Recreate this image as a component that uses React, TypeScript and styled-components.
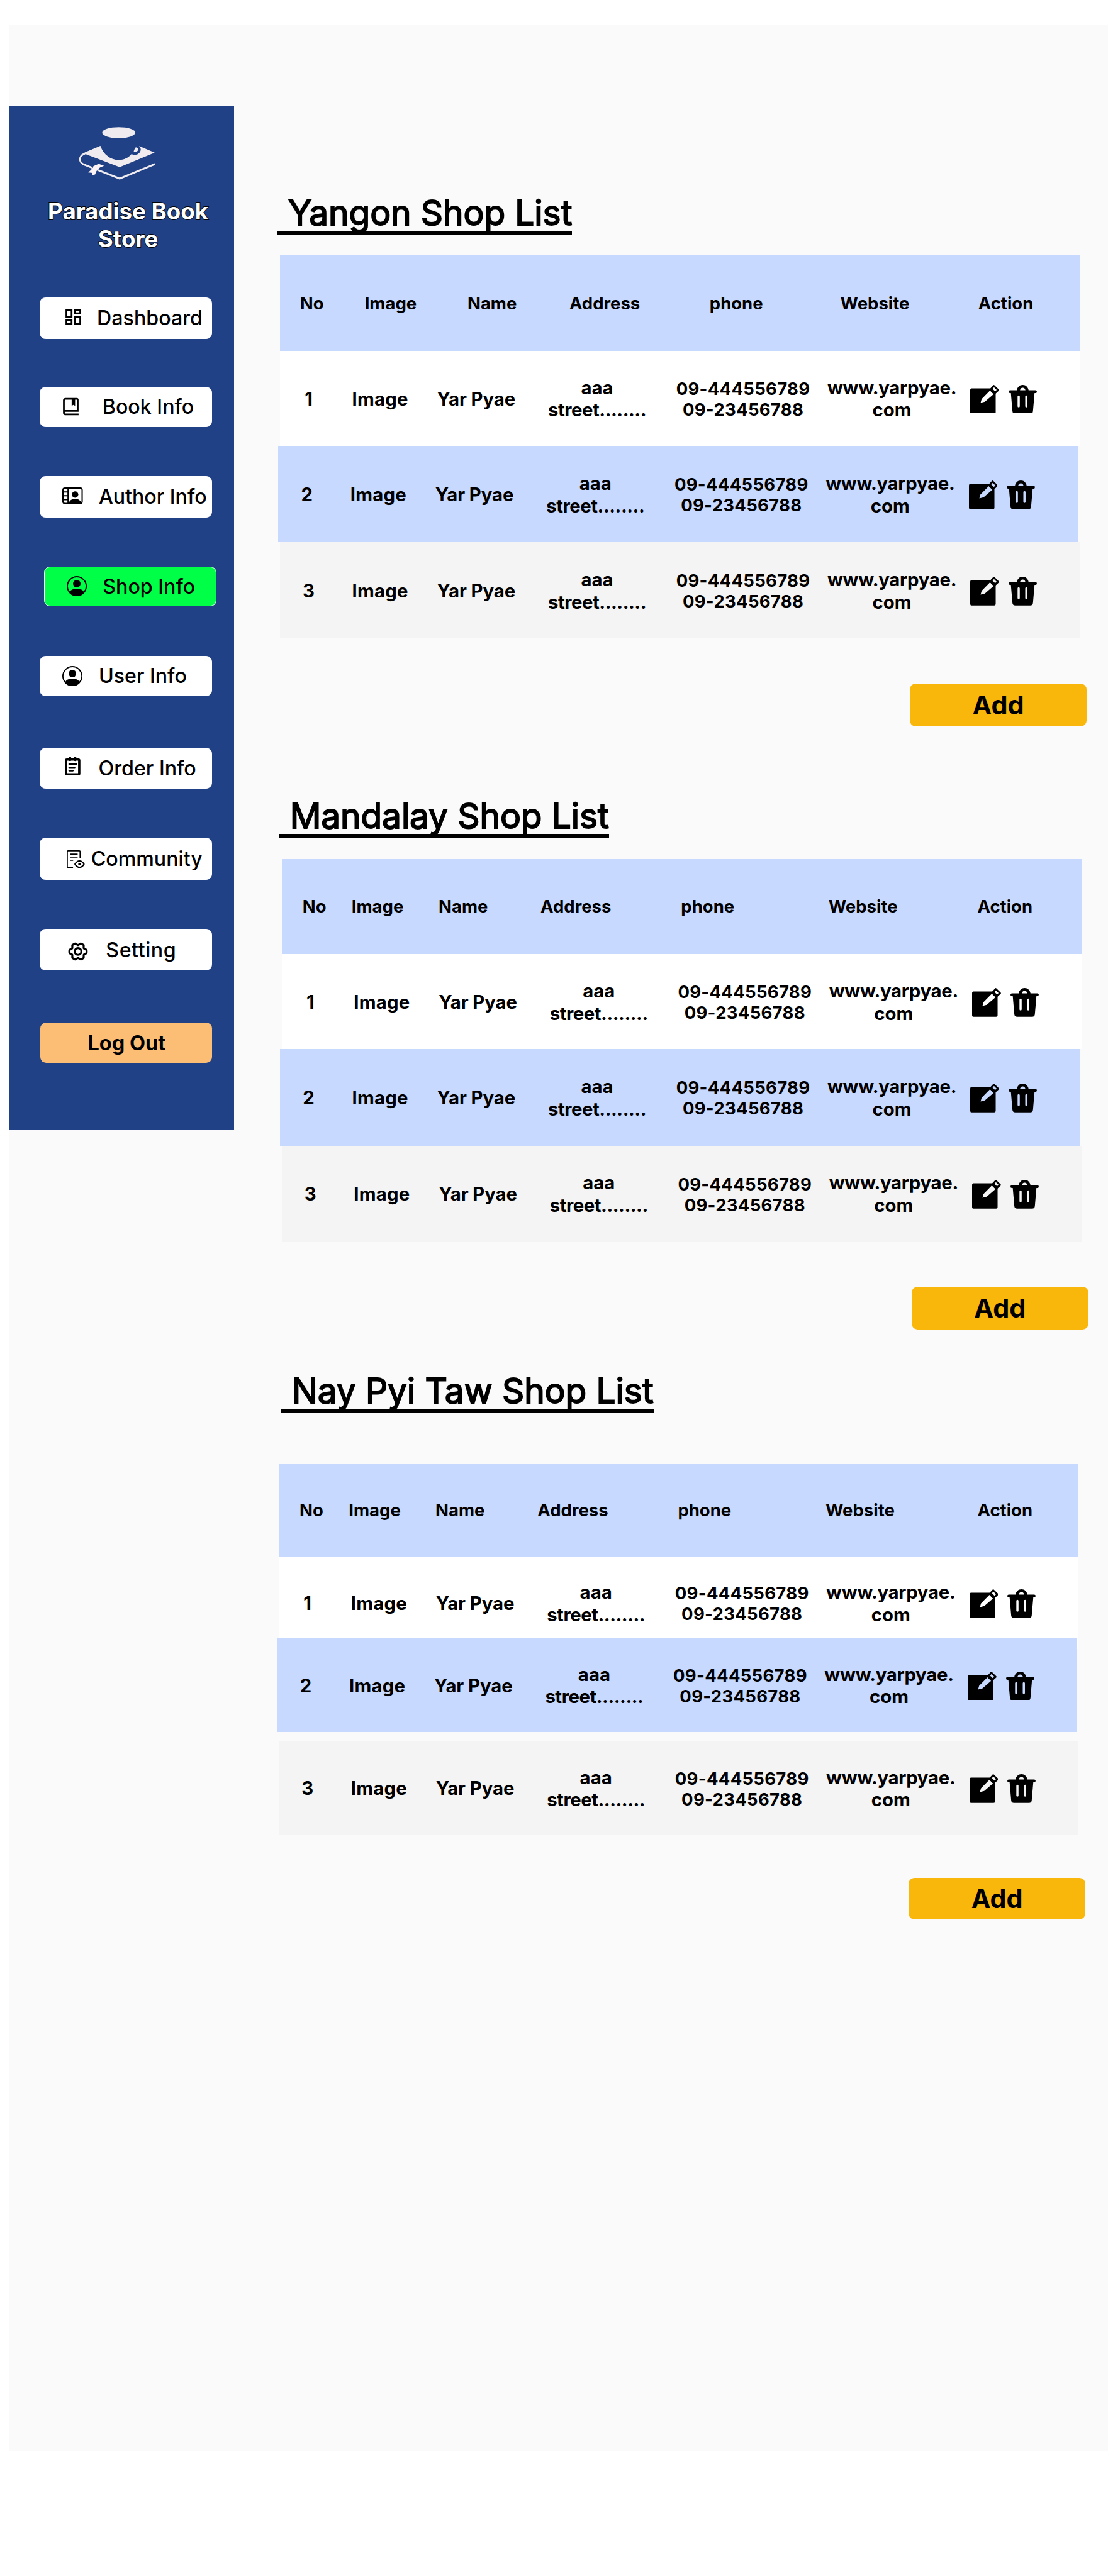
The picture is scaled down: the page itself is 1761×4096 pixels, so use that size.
import React from 'react';
import styled, { createGlobalStyle } from 'styled-components';
import { BsPersonCircle, BsPersonVideo2 } from 'react-icons/bs';
import { BiBookBookmark } from 'react-icons/bi';
import { MdOutlineDashboard } from 'react-icons/md';
import { PiGearSixBold } from 'react-icons/pi';

const colors = {
  panel: '#fafafa',
  navy: '#204186',
  green: '#00ff47',
  peach: '#fcbd74',
  amber: '#f9b60b',
  sky: '#c7d9ff',
  mist: '#f4f4f4',
};

const GlobalStyle = createGlobalStyle`
  * { box-sizing: border-box; }
  html, body { margin: 0; padding: 0; background: #fff; overflow: hidden; }
  button { font-family: inherit; color: inherit; cursor: pointer; }
`;

/* The design is drawn on a 1920px wide canvas. */
const Page = styled.div`
  zoom: 0.91705;
  width: 1920px;
  height: 4466px;
  padding: 43px 0 0 15px;
  background: #fff;
  color: #000;
  font-family: Inter, 'Liberation Sans', sans-serif;
`;

const Panel = styled.div`
  display: flex;
  align-items: flex-start;
  height: 4208px;
  padding-top: 141px;
  background: ${colors.panel};
`;

/* ---------- sidebar ---------- */

const Sidebar = styled.aside`
  flex: none;
  display: flex;
  flex-direction: column;
  width: 391px;
  height: 1775.4px;
  background: ${colors.navy};
`;

const LogoBox = styled.div`
  display: flex;
  height: 128.2px;
  padding: 36.5px 0 0 122px;
`;

const Brand = styled.h1`
  width: 300px;
  margin: 30px 0 0 57px;
  font-size: 40px;
  font-weight: 700;
  line-height: 48.4px;
  text-align: center;
  color: #fff;
  -webkit-text-stroke: 2px #000;
  paint-order: stroke fill;
`;

const Nav = styled.nav`
  display: flex;
  flex-direction: column;
  padding: 77px 0 0 54px;
`;

const NavItem = styled.button<{ $height: number; $gap: number; $active?: boolean }>`
  display: flex;
  align-items: center;
  width: 299px;
  height: ${(p) => p.$height}px;
  margin: 0 0 ${(p) => p.$gap}px ${(p) => (p.$active ? 7 : 0)}px;
  padding: 0;
  border: 1.1px solid #fff;
  border-radius: 10px;
  background: ${(p) => (p.$active ? colors.green : '#fff')};
  font-size: 35.1px;
  font-weight: 450;
  line-height: 1.21;
`;

const NavIcon = styled.span<{ $start: number; $drop?: number }>`
  flex: none;
  display: flex;
  margin: ${(p) => (p.$drop ?? 0) * 2}px 0 0 ${(p) => p.$start}px;
`;

const NavLabel = styled.span<{ $start: number; $spacing?: number }>`
  margin-left: ${(p) => p.$start}px;
  padding-top: 1.4px;
  letter-spacing: ${(p) => p.$spacing ?? 0}px;
  white-space: nowrap;
`;

const LogOut = styled.button`
  width: 297px;
  height: 70px;
  margin-left: 1px;
  padding: 2px 0 0 2px;
  border: 0;
  border-radius: 10px;
  background: ${colors.peach};
  font-size: 35.4px;
  font-weight: 700;
  line-height: 1.21;
`;

function Logo() {
  return (
    <svg width="132" height="91.5" viewBox="411 541 396 224" preserveAspectRatio="none" fill="#efebee">
      <ellipse cx="616" cy="565" rx="86" ry="23.5" />
      <path d="M521 622C537 658 574 681 615 681C643 681 668 671 683 655C694 662 713 661 724 650C734 640 732 628 721 621L803 650L621 711L447 657L436 651Z" />
      <path d="M693 648C696 636 701 630 705 627C714 628 720 634 717 640C711 647 702 648 693 648Z" />
      <path d="M522 625L441 653C406 664 406 690 437 701L621 760L805 698" fill="none" stroke="#efebee" strokeWidth="8" strokeLinejoin="round" />
      <path d="M484 707L512 697L540 706L522 711C508 717 497 730 494 742L477 748L480 736L457 734C466 728 476 720 484 711Z" fill="#fff4f5" stroke={colors.navy} strokeWidth="4" paintOrder="stroke" />
    </svg>
  );
}

function NotepadIcon() {
  return (
    <svg width="27" height="33" viewBox="0 0 27 33" fill="none" stroke="#000" strokeLinecap="round">
      <rect x="2" y="5.2" width="23" height="25.8" rx="1.6" strokeWidth="4" />
      <path d="M9 2V6M18 2V6" strokeWidth="4" />
      <path d="M7.6 13.2H20M7.6 18.8H17M7.6 24.4H14" strokeWidth="2.8" />
    </svg>
  );
}

function DocumentViewIcon() {
  return (
    <svg width="31" height="31" viewBox="0 0 31 31" fill="none" stroke="#000" strokeWidth="1.9">
      <path d="M11 30H2.2Q1 30 1 28.8V2.2Q1 1 2.2 1H22Q23.2 1 23.2 2.2V13.6" />
      <path d="M6 6.8H19M6 12H19M6 17.4H11.2" />
      <path d="M14.4 24.1Q17.4 18.6 22.2 18.6T30 24.1Q27 29.6 22.2 29.6T14.4 24.1Z" strokeWidth="2.4" />
      <circle cx="22.1" cy="24.1" r="2.2" fill="#000" stroke="none" />
    </svg>
  );
}

/* ---------- shop lists ---------- */

const Main = styled.main`
  flex: 1;
  padding-top: 153.7px;
`;

const ShopSection = styled.section<{ $left: number; $below: number }>`
  display: flex;
  flex-direction: column;
  align-items: flex-start;
  margin: 0 0 ${(p) => p.$below}px ${(p) => p.$left}px;
`;

const Heading = styled.h2<{ $indent: number; $below: number }>`
  margin: 0 0 ${(p) => p.$below}px ${(p) => p.$indent}px;
  padding-bottom: 1px;
  border-bottom: 6.6px solid #000;
  font-size: 60px;
  font-weight: 400;
  line-height: 61.6px;
  letter-spacing: -0.1px;
  text-indent: 1.6px;
  white-space: pre;
  -webkit-text-stroke: 2px #000;
`;

const Table = styled.div`
  width: 1386px;
`;

const HeaderRow = styled.div<{ $columns: string; $height: number }>`
  display: grid;
  grid-template-columns: ${(p) => p.$columns};
  align-items: center;
  height: ${(p) => p.$height}px;
  padding: 1px 0 0 0.9px;
  background: ${colors.sky};
  font-size: 30px;
  font-weight: 700;
  line-height: 1.21;

  > :first-child { grid-column-start: 2; }
`;

const tones = { plain: '#fff', sky: colors.sky, mist: colors.mist };

const Row = styled.div<{ $tone: keyof typeof tones; $height: number; $above?: number }>`
  display: grid;
  grid-template-columns: 98px 150px 183px 236px 270px 246px 1fr;
  align-items: center;
  height: ${(p) => p.$height}px;
  margin: ${(p) => p.$above ?? 0}px ${(p) => (p.$tone === 'sky' ? 3 : 0)}px 0
    ${(p) => (p.$tone === 'sky' ? -3 : 0)}px;
  padding: 1px 0 0 0.9px;
  background: ${(p) => tones[p.$tone]};
  text-align: center;
  font-weight: 700;
`;

const Cell = styled.span<{ $spacing?: number }>`
  padding-top: 1px;
  font-size: 32px;
  line-height: 38.8px;
  letter-spacing: ${(p) => p.$spacing ?? 0}px;
`;

const PhoneCell = styled.span`
  padding-top: 2px;
  font-size: 30px;
  line-height: 36px;
  letter-spacing: 0.3px;
`;

const Line = styled.span<{ $spacing?: number }>`
  display: block;
  letter-spacing: ${(p) => (p.$spacing === undefined ? 'inherit' : `${p.$spacing}px`)};
  white-space: nowrap;
`;

const Actions = styled.span`
  display: flex;
  gap: 16.2px;
  padding: 1.4px 0 0 13.1px;
`;

const AddButton = styled.button<{ $above: number; $height: number }>`
  width: 306px;
  height: ${(p) => p.$height}px;
  margin: ${(p) => p.$above}px 0 0 1092px;
  padding: 1.6px 0 0;
  border: 0;
  border-radius: 10px;
  background: ${colors.amber};
  font-size: 45px;
  font-weight: 700;
  line-height: 1.21;
`;

function EditIcon() {
  return (
    <svg width="50" height="50" viewBox="0 0 50 50">
      <path
        fillRule="evenodd"
        d="M2.5 6H35L44.2 14V47.5Q44.2 50 41.7 50H2.5Q0 50 0 47.5V8.5Q0 6 2.5 6ZM34.3 9.8L40.6 16L25.4 29.2L18 31.2L19.8 24.6Z"
      />
      <path fillRule="evenodd" d="M40 .5Q41 -.5 42 .5L49.6 8Q50.5 9 49.6 10L41.8 17.2L33 8.2ZM41.3 4.2L38.8 6.8L43.2 11.3L45.9 8.8Z" />
    </svg>
  );
}

function TrashIcon() {
  return (
    <svg width="49" height="50" viewBox="0 0 49 50">
      <path d="M14.2 10C15 3.6 19.2 0 24.5 0S34 3.6 34.8 10H29.4C28.6 6.6 27 5 24.5 5S20.4 6.6 19.6 10Z" />
      <rect y="9.2" width="49" height="5" rx="2.5" />
      <path
        fillRule="evenodd"
        d="M3.8 12H45.2L42.3 45.6Q41.9 50 37.5 50H11.5Q7.1 50 6.7 45.6ZM15.6 20.2V37.2A1.9 1.9 0 0 0 19.4 37.2V20.2A1.9 1.9 0 0 0 15.6 20.2ZM28.9 20.2V37.2A1.9 1.9 0 0 0 32.7 37.2V20.2A1.9 1.9 0 0 0 28.9 20.2Z"
      />
    </svg>
  );
}

type RowSpec = { tone: keyof typeof tones; height: number; above?: number };

type City = {
  title: string;
  left: number;
  below: number;
  headingIndent: number;
  headingBelow: number;
  columns: string;
  headerHeight: number;
  rows: RowSpec[];
  addAbove: number;
  addHeight: number;
};

const wideColumns = '34px 112.2px 178.1px 176.7px 243px 226.5px 239.1px 1fr';
const tightColumns = '35.3px 85.2px 150.8px 176.7px 243.4px 255.6px 258.2px 1fr';
const lastColumns = '35.3px 85.2px 150.3px 177px 243.2px 255.8px 263.4px 1fr';

const evenRows: RowSpec[] = [
  { tone: 'plain', height: 165 },
  { tone: 'sky', height: 167 },
  { tone: 'mist', height: 167 },
];

const cities: City[] = [
  {
    title: ' Yangon Shop List', left: 79, below: 124.7, headingIndent: -4, headingBelow: 36.4,
    columns: wideColumns, headerHeight: 165, rows: evenRows, addAbove: 78, addHeight: 74,
  },
  {
    title: ' Mandalay Shop List', left: 82, below: 74.9, headingIndent: -4, headingBelow: 36.4,
    columns: tightColumns, headerHeight: 165, rows: evenRows, addAbove: 78, addHeight: 74,
  },
  {
    title: ' Nay Pyi Taw Shop List', left: 77, below: 0, headingIndent: 4, headingBelow: 89.2,
    columns: lastColumns, headerHeight: 160.5,
    rows: [
      { tone: 'plain', height: 160.5 },
      { tone: 'sky', height: 162, above: -18.7 },
      { tone: 'mist', height: 161, above: 17.2 },
    ],
    addAbove: 75, addHeight: 72,
  },
];

const headers = ['No', 'Image', 'Name', 'Address', 'phone', 'Website', 'Action'];

function ShopList({ city }: { city: City }) {
  return (
    <ShopSection $left={city.left} $below={city.below}>
      <Heading $indent={city.headingIndent} $below={city.headingBelow}>{city.title}</Heading>
      <Table>
        <HeaderRow $columns={city.columns} $height={city.headerHeight}>
          {headers.map((h) => <span key={h}>{h}</span>)}
        </HeaderRow>
        {city.rows.map((row, i) => (
          <Row key={row.tone} $tone={row.tone} $height={row.height} $above={row.above}>
            <Cell>{i + 1}</Cell>
            <Cell $spacing={0.25}>Image</Cell>
            <Cell $spacing={-0.1}>Yar Pyae</Cell>
            <Cell>
              <Line>aaa</Line>
              <Line $spacing={-0.5}>street........</Line>
            </Cell>
            <PhoneCell>
              <Line>09-444556789</Line>
              <Line>09-23456788</Line>
            </PhoneCell>
            <Cell>
              <Line $spacing={-0.3}>www.yarpyae.</Line>
              <Line>com</Line>
            </Cell>
            <Actions>
              <EditIcon />
              <TrashIcon />
            </Actions>
          </Row>
        ))}
      </Table>
      <AddButton $above={city.addAbove} $height={city.addHeight}>Add</AddButton>
    </ShopSection>
  );
}

export default function App() {
  return (
    <>
      <GlobalStyle />
      <Page>
        <Panel>
          <Sidebar>
            <LogoBox><Logo /></LogoBox>
            <Brand>Paradise Book Store</Brand>
            <Nav>
              <NavItem $height={72.2} $gap={82.6}>
                <NavIcon $start={38.5} $drop={-3.4}><MdOutlineDashboard size={36} /></NavIcon>
                <NavLabel $start={23.5}>Dashboard</NavLabel>
              </NavItem>
              <NavItem $height={69.4} $gap={85}>
                <NavIcon $start={34.5}><BiBookBookmark size={36} /></NavIcon>
                <NavLabel $start={37}>Book Info</NavLabel>
              </NavItem>
              <NavItem $height={72} $gap={85}>
                <NavIcon $start={38}><BsPersonVideo2 size={35.5} /></NavIcon>
                <NavLabel $start={27.5}>Author Info</NavLabel>
              </NavItem>
              <NavItem $height={69.4} $gap={85.4} $active>
                <NavIcon $start={39}><BsPersonCircle size={35} /></NavIcon>
                <NavLabel $start={27}>Shop Info</NavLabel>
              </NavItem>
              <NavItem $height={69.8} $gap={89.4}>
                <NavIcon $start={38}><BsPersonCircle size={35} /></NavIcon>
                <NavLabel $start={28}>User Info</NavLabel>
              </NavItem>
              <NavItem $height={71.7} $gap={85.2}>
                <NavIcon $start={42} $drop={-3.4}><NotepadIcon /></NavIcon>
                <NavLabel $start={31.7}>Order Info</NavLabel>
              </NavItem>
              <NavItem $height={72.8} $gap={85.3}>
                <NavIcon $start={46}><DocumentViewIcon /></NavIcon>
                <NavLabel $start={10.7}>Community</NavLabel>
              </NavItem>
              <NavItem $height={71.8} $gap={90.2}>
                <NavIcon $start={46.5} $drop={3.4}><PiGearSixBold size={37} /></NavIcon>
                <NavLabel $start={30} $spacing={0.6}>Setting</NavLabel>
              </NavItem>
              <LogOut>Log Out</LogOut>
            </Nav>
          </Sidebar>
          <Main>
            {cities.map((city) => <ShopList key={city.title} city={city} />)}
          </Main>
        </Panel>
      </Page>
    </>
  );
}
